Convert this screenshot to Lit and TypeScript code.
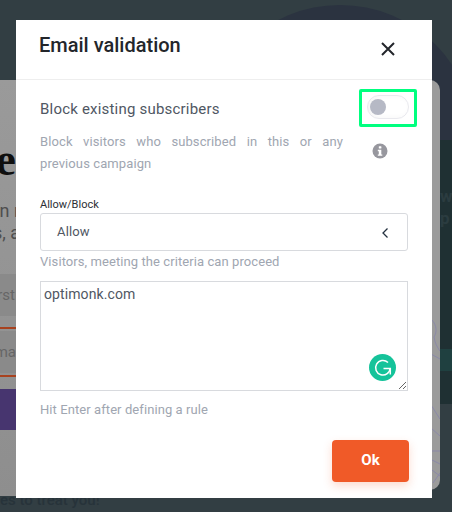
import { LitElement, html, css } from "lit";
import { customElement } from "lit/decorators.js";

@customElement("app-root")
export class AppRoot extends LitElement {
  static styles = css`
    :host {
      display: block;
      position: relative;
      width: 452px;
      height: 512px;
      overflow: hidden;
      background: #323e43;
      font-family: Roboto, "Liberation Sans", sans-serif;
    }
    * { box-sizing: border-box; }
    .circle {
      position: absolute;
      left: 205px;
      top: 5px;
      width: 270px;
      height: 270px;
      border-radius: 50%;
      background: #2b3340;
    }
    .teal {
      position: absolute;
      left: 430px;
      top: 140px;
      width: 22px;
      height: 264px;
      background: #1f3033;
      display: flex;
      flex-direction: column;
      padding: 45px 0 0 12px;
      overflow: hidden;
    }
    .teal span {
      font-size: 17px;
      font-weight: 700;
      line-height: 22px;
      color: #2b3c40;
      white-space: nowrap;
      margin-left: -2px;
    }
    .band {
      position: absolute;
      left: 0;
      right: 0;
      top: 209px;
      height: 22px;
      background: #1f4040;
    }
    .page {
      position: relative;
      padding-top: 80px;
    }
    .card {
      position: relative;
      width: 440px;
      height: 410px;
      background: #9b9b9b;
      border-radius: 0 10px 10px 0;
    }
    .lines {
      position: absolute;
      left: 428px;
      top: 240px;
      width: 12px;
      height: 170px;
      display: block;
    }
    .strip {
      position: relative;
      z-index: 1;
      width: 20px;
      height: 416px;
      overflow: hidden;
      display: flex;
      flex-direction: column;
      align-items: flex-end;
      background: linear-gradient(#9a9a9a, #8e8e8e);
    }
    .big {
      margin-top: 55px;
      font: 700 46px/50px "Liberation Serif", serif;
      color: #0f0f0f;
      margin-right: 4px;
    }
    .line {
      font-size: 18px;
      line-height: 22px;
      color: #4e4e4e;
      white-space: nowrap;
    }
    .first { margin-top: 15px; }
    .field {
      align-self: stretch;
      height: 42px;
      background: #8a8a8a;
      color: #666;
      font-size: 15px;
      line-height: 42px;
      display: flex;
      justify-content: flex-end;
      white-space: nowrap;
    }
    .f1 { margin-top: 30px; }
    .f1 span { margin-right: 5px; }
    .f2 span { margin-right: 4px; }
    .rule {
      align-self: stretch;
      height: 2px;
      background: #a8421f;
    }
    .r1 { margin-top: 11px; margin-bottom: 2px; }
    .r2 { margin-top: 2px; }
    .cta {
      align-self: stretch;
      height: 41px;
      margin-top: 12px;
      background: #47356f;
    }
    .foot {
      margin-top: 2px;
      font-size: 15px;
      font-weight: 500;
      line-height: 16px;
      color: #27333a;
      white-space: nowrap;
    }
    .overlay {
      position: absolute;
      inset: 0;
      z-index: 2;
      padding: 20px 20px 14px 16px;
    }
    .modal {
      height: 478px;
      background: #fff;
      display: flex;
      flex-direction: column;
    }
    .head {
      height: 60px;
      flex: none;
      border-bottom: 1px solid #eeeeee;
      padding: 14px 36px 0 23px;
      display: flex;
      justify-content: space-between;
    }
    h2 {
      margin: 0;
      font-size: 20px;
      font-weight: 500;
      line-height: 22px;
      color: #23262b;
    }
    .close {
      display: block;
      width: 16px;
      height: 16px;
      margin-top: 7px;
    }
    .body {
      padding: 0 24px;
      flex: 1;
      display: flex;
      flex-direction: column;
    }
    .switch-row {
      height: 51px;
      display: flex;
      justify-content: space-between;
    }
    .switch-label {
      margin-top: 19px;
      font-size: 15px;
      line-height: 20px;
      letter-spacing: 0.2px;
      color: #505763;
    }
    .hl {
      width: 58px;
      height: 38px;
      margin: 9px -9px 0 0;
      border: 3px solid #00ff7f;
      border-radius: 2px;
      padding: 3px 5px;
    }
    .track {
      display: flex;
      align-items: center;
      width: 42px;
      height: 24px;
      border: 1px solid #e9e9ee;
      border-radius: 12px;
      padding-left: 2px;
      box-shadow: inset 3px 0 6px rgba(0, 0, 0, 0.04);
    }
    .knob {
      width: 16px;
      height: 16px;
      border-radius: 50%;
      background: #b6b9c5;
    }
    .desc-row {
      display: flex;
      justify-content: space-between;
    }
    .desc {
      width: 303px;
      margin: 0;
      font-size: 13px;
      line-height: 22px;
      letter-spacing: 0.1px;
      color: #a0a6b1;
      text-align: justify;
    }
    .info {
      display: block;
      width: 16px;
      height: 16px;
      margin: 12px 20px 0 0;
    }
    .lab {
      margin-top: 23px;
      font-size: 11px;
      line-height: 14px;
      color: #2b2e33;
    }
    .select {
      margin-top: 1px;
      height: 38px;
      border: 1px solid #d8dade;
      border-radius: 3px;
      display: flex;
      align-items: center;
      justify-content: space-between;
      padding: 0 18px 1px 16px;
      font-size: 13px;
      letter-spacing: 0.15px;
      color: #505763;
    }
    .chev { display: block; width: 8px; height: 12px; margin-top: 2px; }
    .hint {
      font-size: 13px;
      line-height: 20px;
      letter-spacing: 0.08px;
      color: #a0a6b1;
    }
    .h1 { margin-top: 1px; }
    .wrap {
      position: relative;
      margin-top: 9px;
      height: 110px;
    }
    textarea {
      display: block;
      width: 100%;
      height: 110px;
      margin: 0;
      padding: 2px 3px;
      border: 1px solid #d8dade;
      border-radius: 0;
      outline: none;
      resize: vertical;
      font: 400 14px/20px Roboto, "Liberation Sans", sans-serif;
      letter-spacing: 0.1px;
      color: #505763;
      background: #fff;
    }
    .g {
      position: absolute;
      right: 12px;
      bottom: 10px;
      width: 27px;
      height: 27px;
      display: block;
    }
    .h2 { margin-top: 9px; }
    .foot-row {
      margin-top: 20px;
      display: flex;
      justify-content: flex-end;
      margin-right: -1px;
    }
    .ok {
      width: 77px;
      height: 42px;
      border: none;
      border-radius: 4px;
      padding: 0 0 2px;
      background: #f05a28;
      color: #fff;
      font: 700 15px Roboto, "Liberation Sans", sans-serif;
      box-shadow: 0 4px 10px rgba(240, 90, 40, 0.22);
    }
  `;

  render() {
    return html`
      <div class="circle"></div>
      <div class="teal">
        <span>wh</span><span>p</span>
        <div class="band"></div>
      </div>
      <div class="page">
        <div class="card">
          <svg class="lines" viewBox="0 0 12 170" fill="none" stroke="#8b89a8" stroke-width="1">
            <path d="M4 0c5 6 5 12 2 17 1 6 3 10 6 14M3 34l9 5" />
            <path d="M3 85l9 14M3 108l9 8" />
            <path d="M3 131h9M4 140l8 4M4 150l8 6M5 163l7-10" />
          </svg>
          <div class="strip">
            <div class="big">e</div>
            <div class="line first">n r</div>
            <div class="line">s, a</div>
            <div class="field f1"><span>rst</span></div>
            <div class="rule r1"></div>
            <div class="field f2"><span>ma</span></div>
            <div class="rule r2"></div>
            <div class="cta"></div>
          </div>
        </div>
        <div class="foot">es to treat you!</div>
      </div>
      <div class="overlay">
        <div class="modal">
          <div class="head">
            <h2>Email validation</h2>
            <svg class="close" viewBox="0 0 16 16" fill="none" stroke="#23262b" stroke-width="2">
              <path d="M2 2l12 12M14 2L2 14" />
            </svg>
          </div>
          <div class="body">
            <div class="switch-row">
              <div class="switch-label">Block existing subscribers</div>
              <div class="hl">
                <div class="track"><div class="knob"></div></div>
              </div>
            </div>
            <div class="desc-row">
              <p class="desc">Block visitors who subscribed in this or any previous campaign</p>
              <svg class="info" viewBox="0 0 16 16">
                <circle cx="8" cy="8" r="7.5" fill="#97979e" />
                <rect x="6.8" y="3.2" width="2.6" height="2.4" rx="0.6" fill="#fff" />
                <path d="M5.8 6.8h3.5v4.6h1v1.4H5.8v-1.4h1v-3.2h-1z" fill="#fff" />
              </svg>
            </div>
            <div class="lab">Allow/Block</div>
            <div class="select">
              <span>Allow</span>
              <svg class="chev" viewBox="0 0 8 12" fill="none" stroke="#23303f" stroke-width="1.3">
                <path d="M6.5 1.5L2 6l4.5 4.5" />
              </svg>
            </div>
            <div class="hint h1">Visitors, meeting the criteria can proceed</div>
            <div class="wrap">
              <textarea .value=${"optimonk.com"}></textarea>
              <svg class="g" viewBox="0 0 27 27" fill="none">
                <circle cx="13.5" cy="13.5" r="13.5" fill="#15c39a" />
                <path d="M19 8.5a7.3 7.3 0 1 0 2.2 5.5" stroke="#fff" stroke-width="1.5" />
                <path d="M14.5 14.4h6.8v6.2" stroke="#fff" stroke-width="1.5" />
              </svg>
            </div>
            <div class="hint h2">Hit Enter after defining a rule</div>
            <div class="foot-row"><button class="ok">Ok</button></div>
          </div>
        </div>
      </div>
    `;
  }
}
